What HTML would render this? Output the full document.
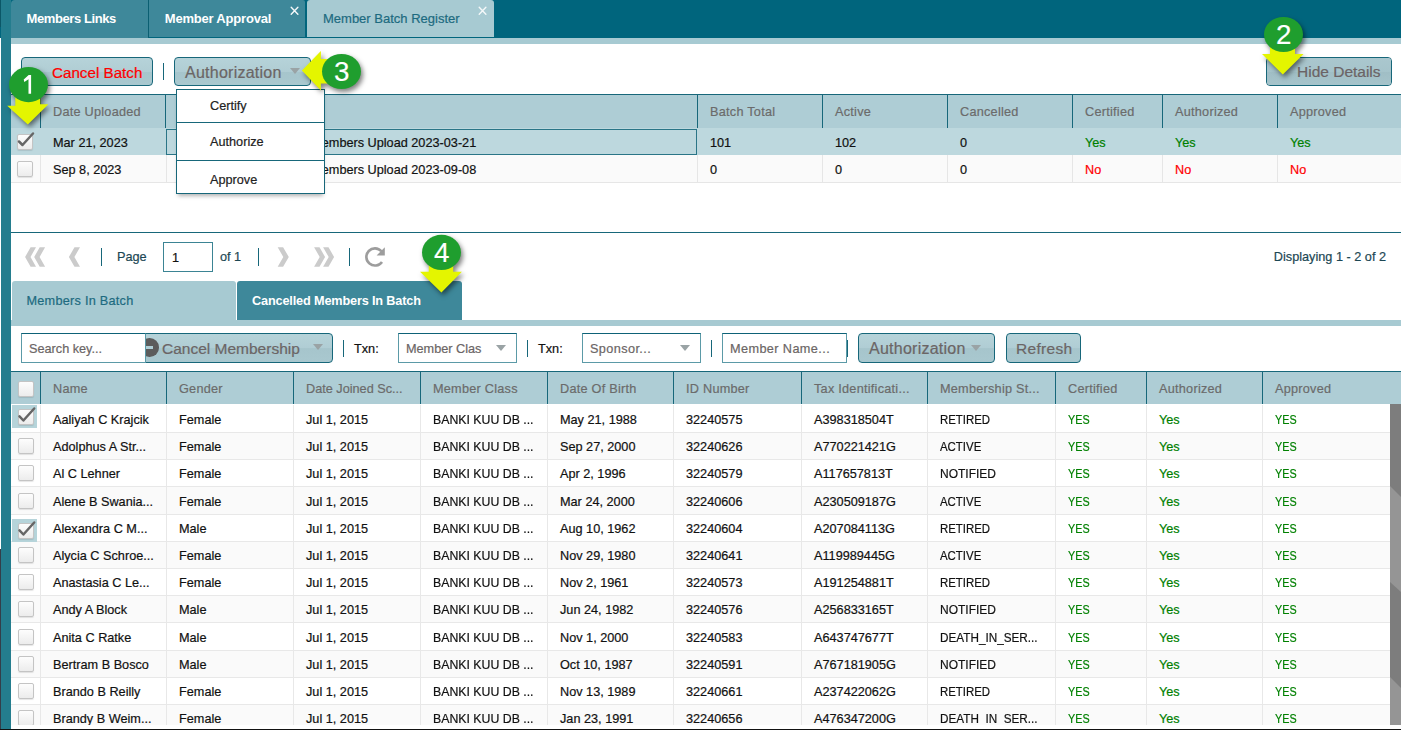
<!DOCTYPE html>
<html><head><meta charset="utf-8"><style>
html,body{margin:0;padding:0;width:1401px;height:730px;overflow:hidden;background:#fff;font-family:'Liberation Sans', sans-serif;}
body div{position:absolute;}
.t{white-space:nowrap;-webkit-text-stroke:0.2px currentColor;}
.btn{border:1px solid #17677a;border-radius:4px;box-sizing:border-box;background:linear-gradient(#b6d3d9 0%,#b0cdd4 50%,#a6c5cc 52%,#a9c8cf 100%);}
.cb{width:14px;height:14px;border:1px solid #c4c4c4;border-radius:2px;background:linear-gradient(#fdfdfd,#ececec);box-shadow:0 1px 1px rgba(0,0,0,0.1);}
</style></head><body>
<div style="left:0px;top:0px;width:1401px;height:38px;background:#00657d"></div>
<div style="left:1px;top:0px;width:10px;height:730px;background:#247d8e"></div>
<div style="left:0px;top:0px;width:1px;height:27px;background:#0b5767"></div>
<div style="left:0px;top:549px;width:1px;height:181px;background:#343e4a"></div>
<div style="left:11px;top:0px;width:137px;height:38px;background:#3e889a;border-top-left-radius:4px"></div>
<div style="left:148px;top:0px;width:1px;height:38px;background:#0b5f72"></div>
<div style="left:149px;top:0px;width:156px;height:37px;background:#3e889a;border-top-right-radius:2px"></div>
<div style="left:307px;top:0px;width:187px;height:37px;background:#a7cad2;border-top-left-radius:3px;border-top-right-radius:3px"></div>
<div class="t" style="left:26.5px;top:12.00px;font-size:13px;line-height:13px;color:#fff;font-weight:bold;letter-spacing:-0.4px;-webkit-text-stroke:0">Members Links</div>
<div class="t" style="left:164.8px;top:12.00px;font-size:13px;line-height:13px;color:#fff;font-weight:bold;letter-spacing:-0.2px;-webkit-text-stroke:0">Member Approval</div>
<div class="t" style="left:323px;top:12.00px;font-size:13px;line-height:13px;color:#1d6a80;font-weight:normal;">Member Batch Register</div>
<svg style="position:absolute;left:0;top:0" width="500" height="20"><g stroke="#f4f8f9" stroke-width="1.4" stroke-linecap="round"><path d="M291.2 7.2 L297.9 14.3 M297.9 7.2 L291.2 14.3"/><path d="M479.2 7.2 L485.9 14.3 M485.9 7.2 L479.2 14.3"/></g></svg>
<div style="left:11px;top:38px;width:1390px;height:6px;background:#a7cad2"></div>
<div class="btn" style="left:21px;top:57px;width:132px;height:29px;"></div>
<div class="t" style="left:52px;top:64.73px;font-size:15.2px;line-height:15.2px;color:#ff0000;font-weight:normal;letter-spacing:0px">Cancel Batch</div>
<div style="left:163px;top:63px;width:1px;height:17px;background:#17677a"></div>
<div class="btn" style="left:174px;top:57px;width:137px;height:29px;"></div>
<div class="t" style="left:185px;top:64.76px;font-size:16px;line-height:16px;color:#6b6565;font-weight:normal;letter-spacing:0.25px">Authorization</div>
<div style="left:290px;top:68px;width:0;height:0;border-left:5px solid transparent;border-right:5px solid transparent;border-top:6px solid #9aa3a5"></div>
<div class="btn" style="left:1266px;top:57px;width:126px;height:29px;"></div>
<div class="t" style="left:1297px;top:65.18px;font-size:15.5px;line-height:15.5px;color:#6b6365;font-weight:normal;letter-spacing:0px">Hide Details</div>
<div style="left:1267px;top:58px;width:124px;height:27px;border-radius:3px;background:linear-gradient(#aac7ce 0%,#a6c4cb 50%,#a0bec5 52%,#a6c4cb 100%)"></div>
<div class="t" style="left:1297px;top:64.18px;font-size:15.5px;line-height:15.5px;color:#6b6365;font-weight:normal;">Hide Details</div>
<div style="left:11px;top:94px;width:1390px;height:1px;background:#17677a"></div>
<div style="left:11px;top:95px;width:1390px;height:33px;background:#aecdd5"></div>
<div style="left:165px;top:95px;width:1px;height:33px;background:#17677a"></div>
<div style="left:697px;top:95px;width:1px;height:33px;background:#17677a"></div>
<div style="left:822px;top:95px;width:1px;height:33px;background:#17677a"></div>
<div style="left:947px;top:95px;width:1px;height:33px;background:#17677a"></div>
<div style="left:1072px;top:95px;width:1px;height:33px;background:#17677a"></div>
<div style="left:1162px;top:95px;width:1px;height:33px;background:#17677a"></div>
<div style="left:1277px;top:95px;width:1px;height:33px;background:#17677a"></div>
<div style="left:40px;top:95px;width:1px;height:33px;background:#17677a"></div>
<div class="t" style="left:53px;top:105.75px;font-size:12.7px;line-height:12.7px;color:#6b6b6b;font-weight:normal;letter-spacing:0.25px">Date Uploaded</div>
<div class="t" style="left:710px;top:105.75px;font-size:12.7px;line-height:12.7px;color:#6b6b6b;font-weight:normal;letter-spacing:0.25px">Batch Total</div>
<div class="t" style="left:835px;top:105.75px;font-size:12.7px;line-height:12.7px;color:#6b6b6b;font-weight:normal;letter-spacing:0.25px">Active</div>
<div class="t" style="left:960px;top:105.75px;font-size:12.7px;line-height:12.7px;color:#6b6b6b;font-weight:normal;letter-spacing:0.25px">Cancelled</div>
<div class="t" style="left:1085px;top:105.75px;font-size:12.7px;line-height:12.7px;color:#6b6b6b;font-weight:normal;letter-spacing:0.25px">Certified</div>
<div class="t" style="left:1175px;top:105.75px;font-size:12.7px;line-height:12.7px;color:#6b6b6b;font-weight:normal;letter-spacing:0.25px">Authorized</div>
<div class="t" style="left:1290px;top:105.75px;font-size:12.7px;line-height:12.7px;color:#6b6b6b;font-weight:normal;letter-spacing:0.25px">Approved</div>
<div style="left:11px;top:128px;width:1390px;height:27px;background:#bdd8de"></div>
<div style="left:11px;top:155px;width:1390px;height:27px;background:#fafafa"></div>
<div style="left:11px;top:182px;width:1390px;height:1px;background:#e6e6e6"></div>
<div style="left:40px;top:155px;width:1px;height:27px;background:#e6e6e6"></div>
<div style="left:166px;top:155px;width:1px;height:27px;background:#e6e6e6"></div>
<div style="left:697px;top:155px;width:1px;height:27px;background:#e6e6e6"></div>
<div style="left:822px;top:155px;width:1px;height:27px;background:#e6e6e6"></div>
<div style="left:947px;top:155px;width:1px;height:27px;background:#e6e6e6"></div>
<div style="left:1072px;top:155px;width:1px;height:27px;background:#e6e6e6"></div>
<div style="left:1162px;top:155px;width:1px;height:27px;background:#e6e6e6"></div>
<div style="left:1277px;top:155px;width:1px;height:27px;background:#e6e6e6"></div>
<div style="left:166px;top:129px;width:531px;height:26px;border:1px solid #2a7587;box-sizing:border-box"></div>
<div class="t" style="left:53px;top:136.55px;font-size:12.7px;line-height:12.7px;color:#111;font-weight:normal;">Mar 21, 2023</div>
<div class="t" style="left:0px;top:136.55px;font-size:12.7px;line-height:12.7px;color:#111;font-weight:normal;"></div>
<div class="t" style="left:710px;top:136.55px;font-size:12.7px;line-height:12.7px;color:#111;font-weight:normal;">101</div>
<div class="t" style="left:835px;top:136.55px;font-size:12.7px;line-height:12.7px;color:#111;font-weight:normal;">102</div>
<div class="t" style="left:960px;top:136.55px;font-size:12.7px;line-height:12.7px;color:#111;font-weight:normal;">0</div>
<div class="t" style="left:1085px;top:136.55px;font-size:12.7px;line-height:12.7px;color:#008000;font-weight:normal;">Yes</div>
<div class="t" style="left:1175px;top:136.55px;font-size:12.7px;line-height:12.7px;color:#008000;font-weight:normal;">Yes</div>
<div class="t" style="left:1290px;top:136.55px;font-size:12.7px;line-height:12.7px;color:#008000;font-weight:normal;">Yes</div>
<div class="t" style="left:53px;top:163.55px;font-size:12.7px;line-height:12.7px;color:#111;font-weight:normal;">Sep 8, 2023</div>
<div class="t" style="left:0px;top:163.55px;font-size:12.7px;line-height:12.7px;color:#111;font-weight:normal;"></div>
<div class="t" style="left:710px;top:163.55px;font-size:12.7px;line-height:12.7px;color:#111;font-weight:normal;">0</div>
<div class="t" style="left:835px;top:163.55px;font-size:12.7px;line-height:12.7px;color:#111;font-weight:normal;">0</div>
<div class="t" style="left:960px;top:163.55px;font-size:12.7px;line-height:12.7px;color:#111;font-weight:normal;">0</div>
<div class="t" style="left:1085px;top:163.55px;font-size:12.7px;line-height:12.7px;color:#ff0000;font-weight:normal;">No</div>
<div class="t" style="left:1175px;top:163.55px;font-size:12.7px;line-height:12.7px;color:#ff0000;font-weight:normal;">No</div>
<div class="t" style="left:1290px;top:163.55px;font-size:12.7px;line-height:12.7px;color:#ff0000;font-weight:normal;">No</div>
<div class="cb" style="left:17px;top:134px"></div>
<svg style="position:absolute;left:16px;top:130px" width="22" height="20" viewBox="0 0 22 20"><path d="M3 11.5 L6.5 15 L17 3.5" fill="none" stroke="#666" stroke-width="2.5" stroke-linecap="round" stroke-linejoin="round"/></svg>
<div class="cb" style="left:17px;top:161px"></div>
<div style="left:11px;top:232px;width:1390px;height:1px;background:#17677a"></div>
<div class="t" style="right:15px;top:250.95px;font-size:12.7px;line-height:12.7px;color:#1c4754;font-weight:normal;">Displaying 1 - 2 of 2</div>
<div class="t" style="left:117px;top:250.95px;font-size:12.7px;line-height:12.7px;color:#1c4754;font-weight:normal;">Page</div>
<div style="left:163px;top:242px;width:50px;height:30px;border:1px solid #3b8494;box-sizing:border-box;background:#fff"></div>
<div class="t" style="left:172px;top:251.75px;font-size:12.7px;line-height:12.7px;color:#111;font-weight:normal;">1</div>
<div class="t" style="left:220px;top:250.95px;font-size:12.7px;line-height:12.7px;color:#1c4754;font-weight:normal;">of 1</div>
<div style="left:101px;top:248px;width:1px;height:18px;background:#17677a"></div>
<div style="left:258px;top:248px;width:1px;height:18px;background:#17677a"></div>
<div style="left:349px;top:248px;width:1px;height:18px;background:#17677a"></div>
<div style="left:12px;top:281px;width:224px;height:40px;background:#a7cad2;border-top-left-radius:3px;border-top-right-radius:3px"></div>
<div style="left:237px;top:281px;width:225px;height:40px;background:#3e889a;border-top-left-radius:3px;border-top-right-radius:3px"></div>
<div class="t" style="left:26.5px;top:295.25px;font-size:12.7px;line-height:12.7px;color:#1d6a80;font-weight:normal;letter-spacing:0.25px">Members In Batch</div>
<div class="t" style="left:252px;top:295.25px;font-size:12.7px;line-height:12.7px;color:#fff;font-weight:bold;letter-spacing:-0.15px;-webkit-text-stroke:0">Cancelled Members In Batch</div>
<div style="left:11px;top:320px;width:1390px;height:6px;background:#a7cad2"></div>
<div class="btn" style="left:145px;top:333px;width:188px;height:30px;border-top-left-radius:0;border-bottom-left-radius:0"></div>
<div class="t" style="left:162px;top:341.48px;font-size:15.5px;line-height:15.5px;color:#6b6565;font-weight:normal;">Cancel Membership</div>
<div style="left:313px;top:344px;width:0;height:0;border-left:5px solid transparent;border-right:5px solid transparent;border-top:6px solid #9aa3a5"></div>
<div style="left:343px;top:340px;width:1px;height:17px;background:#17677a"></div>
<div class="t" style="left:354px;top:343.25px;font-size:12.7px;line-height:12.7px;color:#111;font-weight:normal;">Txn:</div>
<div style="left:398px;top:333px;width:119px;height:30px;border:1px solid #5b9aa7;border-top-color:#0e6277;box-sizing:border-box;background:#fff"></div>
<div class="t" style="left:406px;top:343.25px;font-size:12.7px;line-height:12.7px;color:#6b6565;font-weight:normal;">Member Clas</div>
<div style="left:496px;top:345px;width:0;height:0;border-left:5px solid transparent;border-right:5px solid transparent;border-top:6px solid #9aa3a5"></div>
<div style="left:527px;top:340px;width:1px;height:17px;background:#17677a"></div>
<div class="t" style="left:538px;top:343.25px;font-size:12.7px;line-height:12.7px;color:#111;font-weight:normal;">Txn:</div>
<div style="left:582px;top:333px;width:119px;height:30px;border:1px solid #5b9aa7;border-top-color:#0e6277;box-sizing:border-box;background:#fff"></div>
<div class="t" style="left:590px;top:343.25px;font-size:12.7px;line-height:12.7px;color:#6b6565;font-weight:normal;letter-spacing:0.4px">Sponsor...</div>
<div style="left:680px;top:345px;width:0;height:0;border-left:5px solid transparent;border-right:5px solid transparent;border-top:6px solid #9aa3a5"></div>
<div style="left:711px;top:340px;width:1px;height:17px;background:#17677a"></div>
<div style="left:722px;top:333px;width:125px;height:30px;border:1px solid #5b9aa7;border-top-color:#0e6277;box-sizing:border-box;background:#fff"></div>
<div class="t" style="left:730px;top:343.25px;font-size:12.7px;line-height:12.7px;color:#6b6565;font-weight:normal;letter-spacing:0.4px">Member Name...</div>
<div class="btn" style="left:858px;top:333px;width:137px;height:30px;"></div>
<div class="t" style="left:869px;top:340.76px;font-size:16px;line-height:16px;color:#6b6565;font-weight:normal;letter-spacing:0.25px">Authorization</div>
<div style="left:971px;top:345px;width:0;height:0;border-left:5px solid transparent;border-right:5px solid transparent;border-top:6px solid #9aa3a5"></div>
<div style="left:847px;top:340px;width:1px;height:17px;background:#17677a"></div>
<div class="btn" style="left:1006px;top:333px;width:75px;height:30px;"></div>
<div class="t" style="left:1016px;top:341.18px;font-size:15.5px;line-height:15.5px;color:#6b6565;font-weight:normal;letter-spacing:0.3px">Refresh</div>
<div style="left:11px;top:371px;width:1390px;height:1px;background:#17677a"></div>
<div style="left:11px;top:372px;width:1390px;height:32px;background:#aecdd5"></div>
<div style="left:40px;top:372px;width:32px;height:0px;"></div>
<div style="left:40px;top:372px;width:1px;height:32px;background:#17677a"></div>
<div style="left:166px;top:372px;width:32px;height:0px;"></div>
<div style="left:166px;top:372px;width:1px;height:32px;background:#17677a"></div>
<div style="left:293px;top:372px;width:32px;height:0px;"></div>
<div style="left:293px;top:372px;width:1px;height:32px;background:#17677a"></div>
<div style="left:420px;top:372px;width:32px;height:0px;"></div>
<div style="left:420px;top:372px;width:1px;height:32px;background:#17677a"></div>
<div style="left:547px;top:372px;width:32px;height:0px;"></div>
<div style="left:547px;top:372px;width:1px;height:32px;background:#17677a"></div>
<div style="left:673px;top:372px;width:32px;height:0px;"></div>
<div style="left:673px;top:372px;width:1px;height:32px;background:#17677a"></div>
<div style="left:801px;top:372px;width:32px;height:0px;"></div>
<div style="left:801px;top:372px;width:1px;height:32px;background:#17677a"></div>
<div style="left:927px;top:372px;width:32px;height:0px;"></div>
<div style="left:927px;top:372px;width:1px;height:32px;background:#17677a"></div>
<div style="left:1055px;top:372px;width:32px;height:0px;"></div>
<div style="left:1055px;top:372px;width:1px;height:32px;background:#17677a"></div>
<div style="left:1146px;top:372px;width:32px;height:0px;"></div>
<div style="left:1146px;top:372px;width:1px;height:32px;background:#17677a"></div>
<div style="left:1262px;top:372px;width:32px;height:0px;"></div>
<div style="left:1262px;top:372px;width:1px;height:32px;background:#17677a"></div>
<div class="t" style="left:53px;top:382.75px;font-size:12.7px;line-height:12.7px;color:#6b6b6b;font-weight:normal;letter-spacing:0.25px">Name</div>
<div class="t" style="left:179px;top:382.75px;font-size:12.7px;line-height:12.7px;color:#6b6b6b;font-weight:normal;letter-spacing:0.25px">Gender</div>
<div class="t" style="left:306px;top:382.75px;font-size:12.7px;line-height:12.7px;color:#6b6b6b;font-weight:normal;">Date Joined Sc...</div>
<div class="t" style="left:433px;top:382.75px;font-size:12.7px;line-height:12.7px;color:#6b6b6b;font-weight:normal;letter-spacing:0.25px">Member Class</div>
<div class="t" style="left:560px;top:382.75px;font-size:12.7px;line-height:12.7px;color:#6b6b6b;font-weight:normal;letter-spacing:0.25px">Date Of Birth</div>
<div class="t" style="left:686px;top:382.75px;font-size:12.7px;line-height:12.7px;color:#6b6b6b;font-weight:normal;letter-spacing:0.25px">ID Number</div>
<div class="t" style="left:814px;top:382.75px;font-size:12.7px;line-height:12.7px;color:#6b6b6b;font-weight:normal;letter-spacing:0.25px">Tax Identificati...</div>
<div class="t" style="left:940px;top:382.75px;font-size:12.7px;line-height:12.7px;color:#6b6b6b;font-weight:normal;letter-spacing:0.25px">Membership St...</div>
<div class="t" style="left:1068px;top:382.75px;font-size:12.7px;line-height:12.7px;color:#6b6b6b;font-weight:normal;letter-spacing:0.25px">Certified</div>
<div class="t" style="left:1159px;top:382.75px;font-size:12.7px;line-height:12.7px;color:#6b6b6b;font-weight:normal;letter-spacing:0.25px">Authorized</div>
<div class="t" style="left:1275px;top:382.75px;font-size:12.7px;line-height:12.7px;color:#6b6b6b;font-weight:normal;letter-spacing:0.25px">Approved</div>
<div class="cb" style="left:17.5px;top:380.5px"></div>
<div style="left:11px;top:404px;width:1379px;height:321px;overflow:hidden">
<div style="left:0;top:0px;width:1379px;height:28px;background:#fff"></div>
<div style="left:0;top:28px;width:1379px;height:1px;background:#e8e8e8"></div>
<div style="left:29px;top:1px;width:1px;height:28px;background:#e8e8e8"></div>
<div style="left:155px;top:1px;width:1px;height:28px;background:#e8e8e8"></div>
<div style="left:282px;top:1px;width:1px;height:28px;background:#e8e8e8"></div>
<div style="left:409px;top:1px;width:1px;height:28px;background:#e8e8e8"></div>
<div style="left:536px;top:1px;width:1px;height:28px;background:#e8e8e8"></div>
<div style="left:662px;top:1px;width:1px;height:28px;background:#e8e8e8"></div>
<div style="left:790px;top:1px;width:1px;height:28px;background:#e8e8e8"></div>
<div style="left:916px;top:1px;width:1px;height:28px;background:#e8e8e8"></div>
<div style="left:1044px;top:1px;width:1px;height:28px;background:#e8e8e8"></div>
<div style="left:1135px;top:1px;width:1px;height:28px;background:#e8e8e8"></div>
<div style="left:1251px;top:1px;width:1px;height:28px;background:#e8e8e8"></div>
<div style="left:1px;top:1px;width:25px;height:23px;background:#b6d4da"></div>
<div class="t" style="left:42px;top:10.05px;font-size:12.7px;line-height:12.7px;color:#111">Aaliyah C Krajcik</div>
<div class="t" style="left:168px;top:10.05px;font-size:12.7px;line-height:12.7px;color:#111">Female</div>
<div class="t" style="left:295px;top:10.05px;font-size:12.7px;line-height:12.7px;color:#111">Jul 1, 2015</div>
<div class="t" style="left:422px;top:10.05px;font-size:12.7px;line-height:12.7px;color:#111;transform:scaleX(0.97);transform-origin:0 0">BANKI KUU DB ...</div>
<div class="t" style="left:549px;top:10.05px;font-size:12.7px;line-height:12.7px;color:#111">May 21, 1988</div>
<div class="t" style="left:675px;top:10.05px;font-size:12.7px;line-height:12.7px;color:#111">32240575</div>
<div class="t" style="left:803px;top:10.05px;font-size:12.7px;line-height:12.7px;color:#111">A398318504T</div>
<div class="t" style="left:929px;top:10.05px;font-size:12.7px;line-height:12.7px;color:#111;transform:scaleX(0.9);transform-origin:0 0">RETIRED</div>
<div class="t" style="left:1057px;top:10.05px;font-size:12.7px;line-height:12.7px;color:#008000;transform:scaleX(0.85);transform-origin:0 0">YES</div>
<div class="t" style="left:1148px;top:10.05px;font-size:12.7px;line-height:12.7px;color:#008000">Yes</div>
<div class="t" style="left:1264px;top:10.05px;font-size:12.7px;line-height:12.7px;color:#008000;transform:scaleX(0.85);transform-origin:0 0">YES</div>
<div class="cb" style="left:7px;top:4.5px"></div>
<svg style="position:absolute;left:5px;top:2px" width="30" height="30" viewBox="0 0 30 30"><path d="M3.5 10.4 L7.4 14.5 L18.2 2.5" fill="none" stroke="#666" stroke-width="2.5" stroke-linecap="round" stroke-linejoin="round"/></svg>
<div style="left:0;top:29px;width:1379px;height:26px;background:#fafafa"></div>
<div style="left:0;top:55px;width:1379px;height:1px;background:#e8e8e8"></div>
<div style="left:29px;top:29px;width:1px;height:26px;background:#e8e8e8"></div>
<div style="left:155px;top:29px;width:1px;height:26px;background:#e8e8e8"></div>
<div style="left:282px;top:29px;width:1px;height:26px;background:#e8e8e8"></div>
<div style="left:409px;top:29px;width:1px;height:26px;background:#e8e8e8"></div>
<div style="left:536px;top:29px;width:1px;height:26px;background:#e8e8e8"></div>
<div style="left:662px;top:29px;width:1px;height:26px;background:#e8e8e8"></div>
<div style="left:790px;top:29px;width:1px;height:26px;background:#e8e8e8"></div>
<div style="left:916px;top:29px;width:1px;height:26px;background:#e8e8e8"></div>
<div style="left:1044px;top:29px;width:1px;height:26px;background:#e8e8e8"></div>
<div style="left:1135px;top:29px;width:1px;height:26px;background:#e8e8e8"></div>
<div style="left:1251px;top:29px;width:1px;height:26px;background:#e8e8e8"></div>
<div class="t" style="left:42px;top:37.05px;font-size:12.7px;line-height:12.7px;color:#111">Adolphus A Str...</div>
<div class="t" style="left:168px;top:37.05px;font-size:12.7px;line-height:12.7px;color:#111">Female</div>
<div class="t" style="left:295px;top:37.05px;font-size:12.7px;line-height:12.7px;color:#111">Jul 1, 2015</div>
<div class="t" style="left:422px;top:37.05px;font-size:12.7px;line-height:12.7px;color:#111;transform:scaleX(0.97);transform-origin:0 0">BANKI KUU DB ...</div>
<div class="t" style="left:549px;top:37.05px;font-size:12.7px;line-height:12.7px;color:#111">Sep 27, 2000</div>
<div class="t" style="left:675px;top:37.05px;font-size:12.7px;line-height:12.7px;color:#111">32240626</div>
<div class="t" style="left:803px;top:37.05px;font-size:12.7px;line-height:12.7px;color:#111">A770221421G</div>
<div class="t" style="left:929px;top:37.05px;font-size:12.7px;line-height:12.7px;color:#111;transform:scaleX(0.9);transform-origin:0 0">ACTIVE</div>
<div class="t" style="left:1057px;top:37.05px;font-size:12.7px;line-height:12.7px;color:#008000;transform:scaleX(0.85);transform-origin:0 0">YES</div>
<div class="t" style="left:1148px;top:37.05px;font-size:12.7px;line-height:12.7px;color:#008000">Yes</div>
<div class="t" style="left:1264px;top:37.05px;font-size:12.7px;line-height:12.7px;color:#008000;transform:scaleX(0.85);transform-origin:0 0">YES</div>
<div class="cb" style="left:7px;top:34px"></div>
<div style="left:0;top:56px;width:1379px;height:26px;background:#fff"></div>
<div style="left:0;top:82px;width:1379px;height:1px;background:#e8e8e8"></div>
<div style="left:29px;top:56px;width:1px;height:26px;background:#e8e8e8"></div>
<div style="left:155px;top:56px;width:1px;height:26px;background:#e8e8e8"></div>
<div style="left:282px;top:56px;width:1px;height:26px;background:#e8e8e8"></div>
<div style="left:409px;top:56px;width:1px;height:26px;background:#e8e8e8"></div>
<div style="left:536px;top:56px;width:1px;height:26px;background:#e8e8e8"></div>
<div style="left:662px;top:56px;width:1px;height:26px;background:#e8e8e8"></div>
<div style="left:790px;top:56px;width:1px;height:26px;background:#e8e8e8"></div>
<div style="left:916px;top:56px;width:1px;height:26px;background:#e8e8e8"></div>
<div style="left:1044px;top:56px;width:1px;height:26px;background:#e8e8e8"></div>
<div style="left:1135px;top:56px;width:1px;height:26px;background:#e8e8e8"></div>
<div style="left:1251px;top:56px;width:1px;height:26px;background:#e8e8e8"></div>
<div class="t" style="left:42px;top:64.05px;font-size:12.7px;line-height:12.7px;color:#111">Al C Lehner</div>
<div class="t" style="left:168px;top:64.05px;font-size:12.7px;line-height:12.7px;color:#111">Female</div>
<div class="t" style="left:295px;top:64.05px;font-size:12.7px;line-height:12.7px;color:#111">Jul 1, 2015</div>
<div class="t" style="left:422px;top:64.05px;font-size:12.7px;line-height:12.7px;color:#111;transform:scaleX(0.97);transform-origin:0 0">BANKI KUU DB ...</div>
<div class="t" style="left:549px;top:64.05px;font-size:12.7px;line-height:12.7px;color:#111">Apr 2, 1996</div>
<div class="t" style="left:675px;top:64.05px;font-size:12.7px;line-height:12.7px;color:#111">32240579</div>
<div class="t" style="left:803px;top:64.05px;font-size:12.7px;line-height:12.7px;color:#111">A117657813T</div>
<div class="t" style="left:929px;top:64.05px;font-size:12.7px;line-height:12.7px;color:#111;transform:scaleX(0.945);transform-origin:0 0">NOTIFIED</div>
<div class="t" style="left:1057px;top:64.05px;font-size:12.7px;line-height:12.7px;color:#008000;transform:scaleX(0.85);transform-origin:0 0">YES</div>
<div class="t" style="left:1148px;top:64.05px;font-size:12.7px;line-height:12.7px;color:#008000">Yes</div>
<div class="t" style="left:1264px;top:64.05px;font-size:12.7px;line-height:12.7px;color:#008000;transform:scaleX(0.85);transform-origin:0 0">YES</div>
<div class="cb" style="left:7px;top:61px"></div>
<div style="left:0;top:83px;width:1379px;height:27px;background:#fafafa"></div>
<div style="left:0;top:110px;width:1379px;height:1px;background:#e8e8e8"></div>
<div style="left:29px;top:83px;width:1px;height:27px;background:#e8e8e8"></div>
<div style="left:155px;top:83px;width:1px;height:27px;background:#e8e8e8"></div>
<div style="left:282px;top:83px;width:1px;height:27px;background:#e8e8e8"></div>
<div style="left:409px;top:83px;width:1px;height:27px;background:#e8e8e8"></div>
<div style="left:536px;top:83px;width:1px;height:27px;background:#e8e8e8"></div>
<div style="left:662px;top:83px;width:1px;height:27px;background:#e8e8e8"></div>
<div style="left:790px;top:83px;width:1px;height:27px;background:#e8e8e8"></div>
<div style="left:916px;top:83px;width:1px;height:27px;background:#e8e8e8"></div>
<div style="left:1044px;top:83px;width:1px;height:27px;background:#e8e8e8"></div>
<div style="left:1135px;top:83px;width:1px;height:27px;background:#e8e8e8"></div>
<div style="left:1251px;top:83px;width:1px;height:27px;background:#e8e8e8"></div>
<div class="t" style="left:42px;top:92.05px;font-size:12.7px;line-height:12.7px;color:#111">Alene B Swania...</div>
<div class="t" style="left:168px;top:92.05px;font-size:12.7px;line-height:12.7px;color:#111">Female</div>
<div class="t" style="left:295px;top:92.05px;font-size:12.7px;line-height:12.7px;color:#111">Jul 1, 2015</div>
<div class="t" style="left:422px;top:92.05px;font-size:12.7px;line-height:12.7px;color:#111;transform:scaleX(0.97);transform-origin:0 0">BANKI KUU DB ...</div>
<div class="t" style="left:549px;top:92.05px;font-size:12.7px;line-height:12.7px;color:#111">Mar 24, 2000</div>
<div class="t" style="left:675px;top:92.05px;font-size:12.7px;line-height:12.7px;color:#111">32240606</div>
<div class="t" style="left:803px;top:92.05px;font-size:12.7px;line-height:12.7px;color:#111">A230509187G</div>
<div class="t" style="left:929px;top:92.05px;font-size:12.7px;line-height:12.7px;color:#111;transform:scaleX(0.9);transform-origin:0 0">ACTIVE</div>
<div class="t" style="left:1057px;top:92.05px;font-size:12.7px;line-height:12.7px;color:#008000;transform:scaleX(0.85);transform-origin:0 0">YES</div>
<div class="t" style="left:1148px;top:92.05px;font-size:12.7px;line-height:12.7px;color:#008000">Yes</div>
<div class="t" style="left:1264px;top:92.05px;font-size:12.7px;line-height:12.7px;color:#008000;transform:scaleX(0.85);transform-origin:0 0">YES</div>
<div class="cb" style="left:7px;top:89px"></div>
<div style="left:0;top:111px;width:1379px;height:26px;background:#fff"></div>
<div style="left:0;top:137px;width:1379px;height:1px;background:#e8e8e8"></div>
<div style="left:29px;top:111px;width:1px;height:26px;background:#e8e8e8"></div>
<div style="left:155px;top:111px;width:1px;height:26px;background:#e8e8e8"></div>
<div style="left:282px;top:111px;width:1px;height:26px;background:#e8e8e8"></div>
<div style="left:409px;top:111px;width:1px;height:26px;background:#e8e8e8"></div>
<div style="left:536px;top:111px;width:1px;height:26px;background:#e8e8e8"></div>
<div style="left:662px;top:111px;width:1px;height:26px;background:#e8e8e8"></div>
<div style="left:790px;top:111px;width:1px;height:26px;background:#e8e8e8"></div>
<div style="left:916px;top:111px;width:1px;height:26px;background:#e8e8e8"></div>
<div style="left:1044px;top:111px;width:1px;height:26px;background:#e8e8e8"></div>
<div style="left:1135px;top:111px;width:1px;height:26px;background:#e8e8e8"></div>
<div style="left:1251px;top:111px;width:1px;height:26px;background:#e8e8e8"></div>
<div style="left:1px;top:115px;width:25px;height:23px;background:#b6d4da"></div>
<div class="t" style="left:42px;top:119.05px;font-size:12.7px;line-height:12.7px;color:#111">Alexandra C M...</div>
<div class="t" style="left:168px;top:119.05px;font-size:12.7px;line-height:12.7px;color:#111">Male</div>
<div class="t" style="left:295px;top:119.05px;font-size:12.7px;line-height:12.7px;color:#111">Jul 1, 2015</div>
<div class="t" style="left:422px;top:119.05px;font-size:12.7px;line-height:12.7px;color:#111;transform:scaleX(0.97);transform-origin:0 0">BANKI KUU DB ...</div>
<div class="t" style="left:549px;top:119.05px;font-size:12.7px;line-height:12.7px;color:#111">Aug 10, 1962</div>
<div class="t" style="left:675px;top:119.05px;font-size:12.7px;line-height:12.7px;color:#111">32240604</div>
<div class="t" style="left:803px;top:119.05px;font-size:12.7px;line-height:12.7px;color:#111">A207084113G</div>
<div class="t" style="left:929px;top:119.05px;font-size:12.7px;line-height:12.7px;color:#111;transform:scaleX(0.9);transform-origin:0 0">RETIRED</div>
<div class="t" style="left:1057px;top:119.05px;font-size:12.7px;line-height:12.7px;color:#008000;transform:scaleX(0.85);transform-origin:0 0">YES</div>
<div class="t" style="left:1148px;top:119.05px;font-size:12.7px;line-height:12.7px;color:#008000">Yes</div>
<div class="t" style="left:1264px;top:119.05px;font-size:12.7px;line-height:12.7px;color:#008000;transform:scaleX(0.85);transform-origin:0 0">YES</div>
<div class="cb" style="left:7px;top:118.5px"></div>
<svg style="position:absolute;left:5px;top:111px" width="30" height="30" viewBox="0 0 30 30"><path d="M3.5 15.4 L7.4 19.5 L18.2 7.5" fill="none" stroke="#666" stroke-width="2.5" stroke-linecap="round" stroke-linejoin="round"/></svg>
<div style="left:0;top:138px;width:1379px;height:26px;background:#fafafa"></div>
<div style="left:0;top:164px;width:1379px;height:1px;background:#e8e8e8"></div>
<div style="left:29px;top:138px;width:1px;height:26px;background:#e8e8e8"></div>
<div style="left:155px;top:138px;width:1px;height:26px;background:#e8e8e8"></div>
<div style="left:282px;top:138px;width:1px;height:26px;background:#e8e8e8"></div>
<div style="left:409px;top:138px;width:1px;height:26px;background:#e8e8e8"></div>
<div style="left:536px;top:138px;width:1px;height:26px;background:#e8e8e8"></div>
<div style="left:662px;top:138px;width:1px;height:26px;background:#e8e8e8"></div>
<div style="left:790px;top:138px;width:1px;height:26px;background:#e8e8e8"></div>
<div style="left:916px;top:138px;width:1px;height:26px;background:#e8e8e8"></div>
<div style="left:1044px;top:138px;width:1px;height:26px;background:#e8e8e8"></div>
<div style="left:1135px;top:138px;width:1px;height:26px;background:#e8e8e8"></div>
<div style="left:1251px;top:138px;width:1px;height:26px;background:#e8e8e8"></div>
<div class="t" style="left:42px;top:146.05px;font-size:12.7px;line-height:12.7px;color:#111">Alycia C Schroe...</div>
<div class="t" style="left:168px;top:146.05px;font-size:12.7px;line-height:12.7px;color:#111">Female</div>
<div class="t" style="left:295px;top:146.05px;font-size:12.7px;line-height:12.7px;color:#111">Jul 1, 2015</div>
<div class="t" style="left:422px;top:146.05px;font-size:12.7px;line-height:12.7px;color:#111;transform:scaleX(0.97);transform-origin:0 0">BANKI KUU DB ...</div>
<div class="t" style="left:549px;top:146.05px;font-size:12.7px;line-height:12.7px;color:#111">Nov 29, 1980</div>
<div class="t" style="left:675px;top:146.05px;font-size:12.7px;line-height:12.7px;color:#111">32240641</div>
<div class="t" style="left:803px;top:146.05px;font-size:12.7px;line-height:12.7px;color:#111">A119989445G</div>
<div class="t" style="left:929px;top:146.05px;font-size:12.7px;line-height:12.7px;color:#111;transform:scaleX(0.9);transform-origin:0 0">ACTIVE</div>
<div class="t" style="left:1057px;top:146.05px;font-size:12.7px;line-height:12.7px;color:#008000;transform:scaleX(0.85);transform-origin:0 0">YES</div>
<div class="t" style="left:1148px;top:146.05px;font-size:12.7px;line-height:12.7px;color:#008000">Yes</div>
<div class="t" style="left:1264px;top:146.05px;font-size:12.7px;line-height:12.7px;color:#008000;transform:scaleX(0.85);transform-origin:0 0">YES</div>
<div class="cb" style="left:7px;top:143px"></div>
<div style="left:0;top:165px;width:1379px;height:26px;background:#fff"></div>
<div style="left:0;top:191px;width:1379px;height:1px;background:#e8e8e8"></div>
<div style="left:29px;top:165px;width:1px;height:26px;background:#e8e8e8"></div>
<div style="left:155px;top:165px;width:1px;height:26px;background:#e8e8e8"></div>
<div style="left:282px;top:165px;width:1px;height:26px;background:#e8e8e8"></div>
<div style="left:409px;top:165px;width:1px;height:26px;background:#e8e8e8"></div>
<div style="left:536px;top:165px;width:1px;height:26px;background:#e8e8e8"></div>
<div style="left:662px;top:165px;width:1px;height:26px;background:#e8e8e8"></div>
<div style="left:790px;top:165px;width:1px;height:26px;background:#e8e8e8"></div>
<div style="left:916px;top:165px;width:1px;height:26px;background:#e8e8e8"></div>
<div style="left:1044px;top:165px;width:1px;height:26px;background:#e8e8e8"></div>
<div style="left:1135px;top:165px;width:1px;height:26px;background:#e8e8e8"></div>
<div style="left:1251px;top:165px;width:1px;height:26px;background:#e8e8e8"></div>
<div class="t" style="left:42px;top:173.05px;font-size:12.7px;line-height:12.7px;color:#111">Anastasia C Le...</div>
<div class="t" style="left:168px;top:173.05px;font-size:12.7px;line-height:12.7px;color:#111">Female</div>
<div class="t" style="left:295px;top:173.05px;font-size:12.7px;line-height:12.7px;color:#111">Jul 1, 2015</div>
<div class="t" style="left:422px;top:173.05px;font-size:12.7px;line-height:12.7px;color:#111;transform:scaleX(0.97);transform-origin:0 0">BANKI KUU DB ...</div>
<div class="t" style="left:549px;top:173.05px;font-size:12.7px;line-height:12.7px;color:#111">Nov 2, 1961</div>
<div class="t" style="left:675px;top:173.05px;font-size:12.7px;line-height:12.7px;color:#111">32240573</div>
<div class="t" style="left:803px;top:173.05px;font-size:12.7px;line-height:12.7px;color:#111">A191254881T</div>
<div class="t" style="left:929px;top:173.05px;font-size:12.7px;line-height:12.7px;color:#111;transform:scaleX(0.9);transform-origin:0 0">RETIRED</div>
<div class="t" style="left:1057px;top:173.05px;font-size:12.7px;line-height:12.7px;color:#008000;transform:scaleX(0.85);transform-origin:0 0">YES</div>
<div class="t" style="left:1148px;top:173.05px;font-size:12.7px;line-height:12.7px;color:#008000">Yes</div>
<div class="t" style="left:1264px;top:173.05px;font-size:12.7px;line-height:12.7px;color:#008000;transform:scaleX(0.85);transform-origin:0 0">YES</div>
<div class="cb" style="left:7px;top:170px"></div>
<div style="left:0;top:192px;width:1379px;height:26px;background:#fafafa"></div>
<div style="left:0;top:218px;width:1379px;height:1px;background:#e8e8e8"></div>
<div style="left:29px;top:192px;width:1px;height:26px;background:#e8e8e8"></div>
<div style="left:155px;top:192px;width:1px;height:26px;background:#e8e8e8"></div>
<div style="left:282px;top:192px;width:1px;height:26px;background:#e8e8e8"></div>
<div style="left:409px;top:192px;width:1px;height:26px;background:#e8e8e8"></div>
<div style="left:536px;top:192px;width:1px;height:26px;background:#e8e8e8"></div>
<div style="left:662px;top:192px;width:1px;height:26px;background:#e8e8e8"></div>
<div style="left:790px;top:192px;width:1px;height:26px;background:#e8e8e8"></div>
<div style="left:916px;top:192px;width:1px;height:26px;background:#e8e8e8"></div>
<div style="left:1044px;top:192px;width:1px;height:26px;background:#e8e8e8"></div>
<div style="left:1135px;top:192px;width:1px;height:26px;background:#e8e8e8"></div>
<div style="left:1251px;top:192px;width:1px;height:26px;background:#e8e8e8"></div>
<div class="t" style="left:42px;top:200.05px;font-size:12.7px;line-height:12.7px;color:#111">Andy A Block</div>
<div class="t" style="left:168px;top:200.05px;font-size:12.7px;line-height:12.7px;color:#111">Male</div>
<div class="t" style="left:295px;top:200.05px;font-size:12.7px;line-height:12.7px;color:#111">Jul 1, 2015</div>
<div class="t" style="left:422px;top:200.05px;font-size:12.7px;line-height:12.7px;color:#111;transform:scaleX(0.97);transform-origin:0 0">BANKI KUU DB ...</div>
<div class="t" style="left:549px;top:200.05px;font-size:12.7px;line-height:12.7px;color:#111">Jun 24, 1982</div>
<div class="t" style="left:675px;top:200.05px;font-size:12.7px;line-height:12.7px;color:#111">32240576</div>
<div class="t" style="left:803px;top:200.05px;font-size:12.7px;line-height:12.7px;color:#111">A256833165T</div>
<div class="t" style="left:929px;top:200.05px;font-size:12.7px;line-height:12.7px;color:#111;transform:scaleX(0.945);transform-origin:0 0">NOTIFIED</div>
<div class="t" style="left:1057px;top:200.05px;font-size:12.7px;line-height:12.7px;color:#008000;transform:scaleX(0.85);transform-origin:0 0">YES</div>
<div class="t" style="left:1148px;top:200.05px;font-size:12.7px;line-height:12.7px;color:#008000">Yes</div>
<div class="t" style="left:1264px;top:200.05px;font-size:12.7px;line-height:12.7px;color:#008000;transform:scaleX(0.85);transform-origin:0 0">YES</div>
<div class="cb" style="left:7px;top:197px"></div>
<div style="left:0;top:219px;width:1379px;height:27px;background:#fff"></div>
<div style="left:0;top:246px;width:1379px;height:1px;background:#e8e8e8"></div>
<div style="left:29px;top:219px;width:1px;height:27px;background:#e8e8e8"></div>
<div style="left:155px;top:219px;width:1px;height:27px;background:#e8e8e8"></div>
<div style="left:282px;top:219px;width:1px;height:27px;background:#e8e8e8"></div>
<div style="left:409px;top:219px;width:1px;height:27px;background:#e8e8e8"></div>
<div style="left:536px;top:219px;width:1px;height:27px;background:#e8e8e8"></div>
<div style="left:662px;top:219px;width:1px;height:27px;background:#e8e8e8"></div>
<div style="left:790px;top:219px;width:1px;height:27px;background:#e8e8e8"></div>
<div style="left:916px;top:219px;width:1px;height:27px;background:#e8e8e8"></div>
<div style="left:1044px;top:219px;width:1px;height:27px;background:#e8e8e8"></div>
<div style="left:1135px;top:219px;width:1px;height:27px;background:#e8e8e8"></div>
<div style="left:1251px;top:219px;width:1px;height:27px;background:#e8e8e8"></div>
<div class="t" style="left:42px;top:228.05px;font-size:12.7px;line-height:12.7px;color:#111">Anita C Ratke</div>
<div class="t" style="left:168px;top:228.05px;font-size:12.7px;line-height:12.7px;color:#111">Male</div>
<div class="t" style="left:295px;top:228.05px;font-size:12.7px;line-height:12.7px;color:#111">Jul 1, 2015</div>
<div class="t" style="left:422px;top:228.05px;font-size:12.7px;line-height:12.7px;color:#111;transform:scaleX(0.97);transform-origin:0 0">BANKI KUU DB ...</div>
<div class="t" style="left:549px;top:228.05px;font-size:12.7px;line-height:12.7px;color:#111">Nov 1, 2000</div>
<div class="t" style="left:675px;top:228.05px;font-size:12.7px;line-height:12.7px;color:#111">32240583</div>
<div class="t" style="left:803px;top:228.05px;font-size:12.7px;line-height:12.7px;color:#111">A643747677T</div>
<div class="t" style="left:929px;top:228.05px;font-size:12.7px;line-height:12.7px;color:#111;transform:scaleX(0.925);transform-origin:0 0">DEATH_IN_SER...</div>
<div class="t" style="left:1057px;top:228.05px;font-size:12.7px;line-height:12.7px;color:#008000;transform:scaleX(0.85);transform-origin:0 0">YES</div>
<div class="t" style="left:1148px;top:228.05px;font-size:12.7px;line-height:12.7px;color:#008000">Yes</div>
<div class="t" style="left:1264px;top:228.05px;font-size:12.7px;line-height:12.7px;color:#008000;transform:scaleX(0.85);transform-origin:0 0">YES</div>
<div class="cb" style="left:7px;top:225px"></div>
<div style="left:0;top:247px;width:1379px;height:26px;background:#fafafa"></div>
<div style="left:0;top:273px;width:1379px;height:1px;background:#e8e8e8"></div>
<div style="left:29px;top:247px;width:1px;height:26px;background:#e8e8e8"></div>
<div style="left:155px;top:247px;width:1px;height:26px;background:#e8e8e8"></div>
<div style="left:282px;top:247px;width:1px;height:26px;background:#e8e8e8"></div>
<div style="left:409px;top:247px;width:1px;height:26px;background:#e8e8e8"></div>
<div style="left:536px;top:247px;width:1px;height:26px;background:#e8e8e8"></div>
<div style="left:662px;top:247px;width:1px;height:26px;background:#e8e8e8"></div>
<div style="left:790px;top:247px;width:1px;height:26px;background:#e8e8e8"></div>
<div style="left:916px;top:247px;width:1px;height:26px;background:#e8e8e8"></div>
<div style="left:1044px;top:247px;width:1px;height:26px;background:#e8e8e8"></div>
<div style="left:1135px;top:247px;width:1px;height:26px;background:#e8e8e8"></div>
<div style="left:1251px;top:247px;width:1px;height:26px;background:#e8e8e8"></div>
<div class="t" style="left:42px;top:255.05px;font-size:12.7px;line-height:12.7px;color:#111">Bertram B Bosco</div>
<div class="t" style="left:168px;top:255.05px;font-size:12.7px;line-height:12.7px;color:#111">Male</div>
<div class="t" style="left:295px;top:255.05px;font-size:12.7px;line-height:12.7px;color:#111">Jul 1, 2015</div>
<div class="t" style="left:422px;top:255.05px;font-size:12.7px;line-height:12.7px;color:#111;transform:scaleX(0.97);transform-origin:0 0">BANKI KUU DB ...</div>
<div class="t" style="left:549px;top:255.05px;font-size:12.7px;line-height:12.7px;color:#111">Oct 10, 1987</div>
<div class="t" style="left:675px;top:255.05px;font-size:12.7px;line-height:12.7px;color:#111">32240591</div>
<div class="t" style="left:803px;top:255.05px;font-size:12.7px;line-height:12.7px;color:#111">A767181905G</div>
<div class="t" style="left:929px;top:255.05px;font-size:12.7px;line-height:12.7px;color:#111;transform:scaleX(0.945);transform-origin:0 0">NOTIFIED</div>
<div class="t" style="left:1057px;top:255.05px;font-size:12.7px;line-height:12.7px;color:#008000;transform:scaleX(0.85);transform-origin:0 0">YES</div>
<div class="t" style="left:1148px;top:255.05px;font-size:12.7px;line-height:12.7px;color:#008000">Yes</div>
<div class="t" style="left:1264px;top:255.05px;font-size:12.7px;line-height:12.7px;color:#008000;transform:scaleX(0.85);transform-origin:0 0">YES</div>
<div class="cb" style="left:7px;top:252px"></div>
<div style="left:0;top:274px;width:1379px;height:26px;background:#fff"></div>
<div style="left:0;top:300px;width:1379px;height:1px;background:#e8e8e8"></div>
<div style="left:29px;top:274px;width:1px;height:26px;background:#e8e8e8"></div>
<div style="left:155px;top:274px;width:1px;height:26px;background:#e8e8e8"></div>
<div style="left:282px;top:274px;width:1px;height:26px;background:#e8e8e8"></div>
<div style="left:409px;top:274px;width:1px;height:26px;background:#e8e8e8"></div>
<div style="left:536px;top:274px;width:1px;height:26px;background:#e8e8e8"></div>
<div style="left:662px;top:274px;width:1px;height:26px;background:#e8e8e8"></div>
<div style="left:790px;top:274px;width:1px;height:26px;background:#e8e8e8"></div>
<div style="left:916px;top:274px;width:1px;height:26px;background:#e8e8e8"></div>
<div style="left:1044px;top:274px;width:1px;height:26px;background:#e8e8e8"></div>
<div style="left:1135px;top:274px;width:1px;height:26px;background:#e8e8e8"></div>
<div style="left:1251px;top:274px;width:1px;height:26px;background:#e8e8e8"></div>
<div class="t" style="left:42px;top:282.05px;font-size:12.7px;line-height:12.7px;color:#111">Brando B Reilly</div>
<div class="t" style="left:168px;top:282.05px;font-size:12.7px;line-height:12.7px;color:#111">Female</div>
<div class="t" style="left:295px;top:282.05px;font-size:12.7px;line-height:12.7px;color:#111">Jul 1, 2015</div>
<div class="t" style="left:422px;top:282.05px;font-size:12.7px;line-height:12.7px;color:#111;transform:scaleX(0.97);transform-origin:0 0">BANKI KUU DB ...</div>
<div class="t" style="left:549px;top:282.05px;font-size:12.7px;line-height:12.7px;color:#111">Nov 13, 1989</div>
<div class="t" style="left:675px;top:282.05px;font-size:12.7px;line-height:12.7px;color:#111">32240661</div>
<div class="t" style="left:803px;top:282.05px;font-size:12.7px;line-height:12.7px;color:#111">A237422062G</div>
<div class="t" style="left:929px;top:282.05px;font-size:12.7px;line-height:12.7px;color:#111;transform:scaleX(0.9);transform-origin:0 0">RETIRED</div>
<div class="t" style="left:1057px;top:282.05px;font-size:12.7px;line-height:12.7px;color:#008000;transform:scaleX(0.85);transform-origin:0 0">YES</div>
<div class="t" style="left:1148px;top:282.05px;font-size:12.7px;line-height:12.7px;color:#008000">Yes</div>
<div class="t" style="left:1264px;top:282.05px;font-size:12.7px;line-height:12.7px;color:#008000;transform:scaleX(0.85);transform-origin:0 0">YES</div>
<div class="cb" style="left:7px;top:279px"></div>
<div style="left:0;top:301px;width:1379px;height:26px;background:#fafafa"></div>
<div style="left:0;top:327px;width:1379px;height:1px;background:#e8e8e8"></div>
<div style="left:29px;top:301px;width:1px;height:26px;background:#e8e8e8"></div>
<div style="left:155px;top:301px;width:1px;height:26px;background:#e8e8e8"></div>
<div style="left:282px;top:301px;width:1px;height:26px;background:#e8e8e8"></div>
<div style="left:409px;top:301px;width:1px;height:26px;background:#e8e8e8"></div>
<div style="left:536px;top:301px;width:1px;height:26px;background:#e8e8e8"></div>
<div style="left:662px;top:301px;width:1px;height:26px;background:#e8e8e8"></div>
<div style="left:790px;top:301px;width:1px;height:26px;background:#e8e8e8"></div>
<div style="left:916px;top:301px;width:1px;height:26px;background:#e8e8e8"></div>
<div style="left:1044px;top:301px;width:1px;height:26px;background:#e8e8e8"></div>
<div style="left:1135px;top:301px;width:1px;height:26px;background:#e8e8e8"></div>
<div style="left:1251px;top:301px;width:1px;height:26px;background:#e8e8e8"></div>
<div class="t" style="left:42px;top:308.55px;font-size:12.7px;line-height:12.7px;color:#111">Brandy B Weim...</div>
<div class="t" style="left:168px;top:308.55px;font-size:12.7px;line-height:12.7px;color:#111">Female</div>
<div class="t" style="left:295px;top:308.55px;font-size:12.7px;line-height:12.7px;color:#111">Jul 1, 2015</div>
<div class="t" style="left:422px;top:308.55px;font-size:12.7px;line-height:12.7px;color:#111;transform:scaleX(0.97);transform-origin:0 0">BANKI KUU DB ...</div>
<div class="t" style="left:549px;top:308.55px;font-size:12.7px;line-height:12.7px;color:#111">Jan 23, 1991</div>
<div class="t" style="left:675px;top:308.55px;font-size:12.7px;line-height:12.7px;color:#111">32240656</div>
<div class="t" style="left:803px;top:308.55px;font-size:12.7px;line-height:12.7px;color:#111">A476347200G</div>
<div class="t" style="left:929px;top:308.55px;font-size:12.7px;line-height:12.7px;color:#111;transform:scaleX(0.925);transform-origin:0 0">DEATH_IN_SER...</div>
<div class="t" style="left:1057px;top:308.55px;font-size:12.7px;line-height:12.7px;color:#008000;transform:scaleX(0.85);transform-origin:0 0">YES</div>
<div class="t" style="left:1148px;top:308.55px;font-size:12.7px;line-height:12.7px;color:#008000">Yes</div>
<div class="t" style="left:1264px;top:308.55px;font-size:12.7px;line-height:12.7px;color:#008000;transform:scaleX(0.85);transform-origin:0 0">YES</div>
<div class="cb" style="left:7px;top:306px"></div>
</div>
<div class="t" style="left:311.2px;top:136.55px;font-size:12.7px;line-height:12.7px;color:#111;font-weight:normal;letter-spacing:0px">Members Upload 2023-03-21</div>
<div class="t" style="left:311.2px;top:163.55px;font-size:12.7px;line-height:12.7px;color:#111;font-weight:normal;">Members Upload 2023-09-08</div>
<div style="left:176px;top:89px;width:149px;height:105px;background:#fff;border:1px solid #17677a;box-sizing:border-box;box-shadow:0 4px 4px -2px rgba(0,0,0,0.3)"></div>
<div style="left:177px;top:122px;width:147px;height:1px;background:#17677a"></div>
<div style="left:177px;top:160px;width:147px;height:1px;background:#17677a"></div>
<div class="t" style="left:210px;top:99.55px;font-size:12.7px;line-height:12.7px;color:#222;font-weight:normal;">Certify</div>
<div class="t" style="left:210px;top:135.55px;font-size:12.7px;line-height:12.7px;color:#222;font-weight:normal;">Authorize</div>
<div class="t" style="left:210px;top:173.55px;font-size:12.7px;line-height:12.7px;color:#222;font-weight:normal;">Approve</div>
<svg style="position:absolute;left:0;top:240px" width="400" height="32" viewBox="0 240 400 32"><g fill="#cbcbcb"><polygon points="30.6,247.2 36,247.2 30.5,257 36,266.7 30.6,266.7 25.1,257"/><polygon points="39.7,247.2 45.1,247.2 39.6,257 45.1,266.7 39.7,266.7 34.2,257"/><polygon points="74.5,247.2 80,247.2 74.4,257 80,266.7 74.5,266.7 68.9,257"/><polygon points="277.7,247.2 283.1,247.2 288.8,257 283.1,266.7 277.7,266.7 283.3,257"/><polygon points="314.1,247.2 319.5,247.2 325.1,257 319.5,266.7 314.1,266.7 319.7,257"/><polygon points="323.1,247.2 328.5,247.2 334.1,257 328.5,266.7 323.1,266.7 328.7,257"/></g><path d="M381.4,251.25 A8.6,8.6 0 1 0 382.0,261.9" fill="none" stroke="#9d9d9d" stroke-width="2.6"/><polygon points="384.8,247.3 384.8,255.4 376.6,255.4" fill="#9d9d9d"/></svg>
<div style="left:140.2px;top:338.2px;width:18.6px;height:18.6px;border-radius:50%;background:#5c5c5c"></div>
<div style="left:145px;top:346px;width:8px;height:3px;background:#b0cfd6"></div>
<div style="left:21px;top:333px;width:125px;height:30px;border:1px solid #5b9aa7;border-top-color:#0e6277;box-sizing:border-box;background:#fff"></div>
<div class="t" style="left:29px;top:343.25px;font-size:12.7px;line-height:12.7px;color:#6b6565;font-weight:normal;">Search key...</div>
<svg style="position:absolute;left:0;top:0;overflow:visible;filter:drop-shadow(2px 3px 2.5px rgba(0,0,0,0.5))" width="1401" height="730"><polygon points="15.3,95 40.3,95 40.3,104.3 48.4,104.3 27.8,124.4 7.2,105.8 15.3,105.8" fill="#e4f500"/><ellipse cx="28.5" cy="84.6" rx="19.5" ry="17.6" fill="#1f9e2e"/></svg>
<svg style="position:absolute;left:0;top:0" width="60" height="110"><polygon points="28.7,74.9 31.1,74.9 31.1,93.8 28.5,93.8 28.5,79.2 24.3,81.9 23.7,79.6" fill="#fff"/></svg>
<svg style="position:absolute;left:0;top:0;overflow:visible;filter:drop-shadow(2px 3px 2.5px rgba(0,0,0,0.5))" width="1401" height="730"><polygon points="1270,45 1295,45 1295,54 1303.6,54 1282.8,74.6 1262,54 1270,54" fill="#e4f500"/><ellipse cx="1283.5" cy="34.5" rx="19.5" ry="17.6" fill="#1f9e2e"/></svg>
<div class="t" style="left:1263.8px;width:40px;text-align:center;top:21.2px;font-size:27.8px;line-height:27.8px;color:#fff;-webkit-text-stroke:0.15px #fff">2</div>
<svg style="position:absolute;left:0;top:0;overflow:visible;filter:drop-shadow(2px 3px 2.5px rgba(0,0,0,0.5))" width="1401" height="730"><polygon points="330,58.9 330,83.4 320.9,83.4 320.9,90.6 301.9,70.6 320.9,50.9 320.9,58.9" fill="#e4f500"/><ellipse cx="341.5" cy="71.5" rx="19.5" ry="17.6" fill="#1f9e2e"/></svg>
<div class="t" style="left:321.8px;width:40px;text-align:center;top:58.2px;font-size:27.8px;line-height:27.8px;color:#fff;-webkit-text-stroke:0.15px #fff">3</div>
<svg style="position:absolute;left:0;top:0;overflow:visible;filter:drop-shadow(2px 3px 2.5px rgba(0,0,0,0.5))" width="1401" height="730"><polygon points="428.8,262 453.2,262 453.2,271.8 461.9,271.8 441.4,292.6 420,271.8 428.8,271.8" fill="#e4f500"/><ellipse cx="441.5" cy="252.4" rx="19.5" ry="17.6" fill="#1f9e2e"/></svg>
<div class="t" style="left:421.8px;width:40px;text-align:center;top:239.1px;font-size:27.8px;line-height:27.8px;color:#fff;-webkit-text-stroke:0.15px #fff">4</div>
<svg style="position:absolute;left:1390px;top:404px" width="11" height="321" viewBox="0 0 11 321"><rect width="11" height="321" fill="#7d7d7d"/><polygon points="0,82 11,93 11,188 0,178" fill="#959595"/><polygon points="0,273 11,284 11,321 0,321" fill="#959595"/></svg>
<div style="left:0px;top:729px;width:1401px;height:1px;background:#111"></div>
</body></html>
